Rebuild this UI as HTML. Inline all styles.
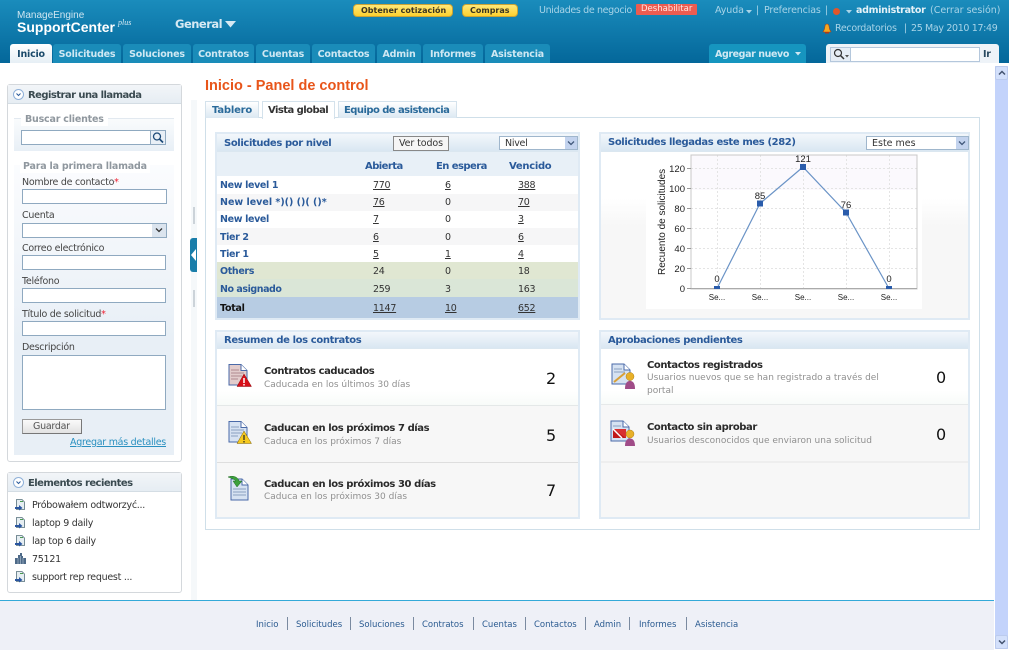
<!DOCTYPE html>
<html lang="es"><head><meta charset="utf-8"><title>SupportCenter Plus</title>
<style>
*{box-sizing:border-box}
html,body{margin:0;padding:0;width:1009px;height:650px;overflow:hidden;background:#fff;font-family:"DejaVu Sans",Verdana,sans-serif;font-size:9.5px;color:#333;letter-spacing:-.27px}
svg text{letter-spacing:0}
.a,.t,svg.i{position:absolute}
.t{white-space:nowrap;line-height:12px}
b{font-weight:bold}
.tab{position:absolute;top:44px;height:19px;background:#1a8cb9;border-radius:3px 3px 0 0;color:#cfe8f3;font-weight:bold;font-size:9.5px;letter-spacing:-.2px;line-height:22px;text-align:center;white-space:nowrap}
.ph{position:absolute;background:linear-gradient(#f3f7fb,#d9e7f2);border-bottom:1px solid #dbe7f0;color:#2a5a9a;font-weight:bold;font-size:10px;letter-spacing:-.38px;padding-left:8px;white-space:nowrap}
.panel{position:absolute;border:2px solid #dfeaf4;background:#fff}
.inp{position:absolute;height:15px;background:#fff;border:1px solid #8fa9c0}
.lab{color:#444}
.row{position:absolute;left:217px;width:361px}
.n{color:#2a5a9a;font-weight:bold;letter-spacing:-.35px}
.u{text-decoration:underline;color:#333}
.ft{top:619px;color:#2a5a90;font-size:8.5px;letter-spacing:0}
.sep{position:absolute;top:617px;width:1px;height:13px;background:#7a8aa0}
.rt{color:#2a2a2a;font-weight:bold;font-size:10px;letter-spacing:-.43px}
.rs{color:#909090;font-size:9px;letter-spacing:0}
.big{font-size:16px;color:#111;letter-spacing:0}
.sb{color:#a8d4e8;font-size:9.5px;letter-spacing:0}
.th{font-size:10px;color:#2a5a9a;font-weight:bold;letter-spacing:-.55px}
.tb{font-size:10px;font-weight:bold;letter-spacing:-.55px}
.bh{font-size:10px;font-weight:bold;color:#3a4a50;letter-spacing:-.55px}
.leg{font-size:9.5px;font-weight:bold;color:#8f979e;letter-spacing:-.2px}
</style></head><body>

<!-- header -->
<div class="a" style="left:0;top:0;width:1009px;height:63px;background:linear-gradient(#1a8cbc,#04679a)"></div>
<div class="t" style="left:17px;top:10px;font-family:'Liberation Sans',sans-serif;font-size:10px;color:#cfe6f1;letter-spacing:0">ManageEngine</div>
<div class="t" style="left:17px;top:21px;font-family:'Liberation Sans',sans-serif;font-size:14px;font-weight:bold;color:#fff;letter-spacing:0">SupportCenter</div>
<div class="t" style="left:118px;top:17px;font-family:'Liberation Serif',serif;font-style:italic;font-size:8px;color:#d4e9f3;letter-spacing:0">plus</div>
<div class="t" style="left:175px;top:18px;font-size:11.5px;font-weight:bold;color:#d6e9f3;letter-spacing:-.5px">General</div>
<svg class="i" style="left:225px;top:21px" width="11" height="7"><path d="M0 0H11L5.500 6.500Z" fill="#d6e9f3"/></svg>

<div class="a" style="left:353px;top:4px;width:100px;height:13px;border-radius:4px;background:linear-gradient(#ffe878,#fdd02e);border:1px solid #c9a336"></div>
<div class="t" style="left:361px;top:5px;font-size:8px;font-weight:bold;color:#3a3420;letter-spacing:0">Obtener cotización</div>
<div class="a" style="left:462px;top:4px;width:56px;height:13px;border-radius:4px;background:linear-gradient(#ffe878,#fdd02e);border:1px solid #c9a336"></div>
<div class="t" style="left:470px;top:5px;font-size:8px;font-weight:bold;color:#3a3420;letter-spacing:0">Compras</div>

<div class="t sb" style="left:539px;top:5px;letter-spacing:-.35px">Unidades de negocio</div>
<div class="a" style="left:636px;top:4px;width:61px;height:11px;background:#ec5c50;border-radius:1px"></div>
<div class="t" style="left:641px;top:3px;font-size:8.5px;color:#ffe6e0;letter-spacing:0">Deshabilitar</div>
<div class="t sb" style="left:715px;top:5px;letter-spacing:-.1px">Ayuda</div>
<svg class="i" style="left:746px;top:10px" width="6" height="4"><path d="M0 0H6L3 3.500Z" fill="#a8d4e8"/></svg>
<div class="t sb" style="left:756px;top:5px">|</div>
<div class="t sb" style="left:764px;top:5px;letter-spacing:-.15px">Preferencias</div>
<div class="t sb" style="left:825px;top:5px">|</div>
<div class="a" style="left:833px;top:8px;width:7px;height:7px;border-radius:50%;background:#e2562a"></div>
<svg class="i" style="left:846px;top:10px" width="6" height="4"><path d="M0 0H6L3 3.500Z" fill="#a8d4e8"/></svg>
<div class="t" style="left:856px;top:5px;font-weight:bold;color:#e4f1f7;font-size:9.500px;letter-spacing:-.3px">administrator</div>
<div class="t sb" style="left:930px;top:5px">(Cerrar sesión)</div>
<svg class="i" style="left:822px;top:23px" width="10" height="11"><path d="M5 1C3 1 3 3 2.500 6L1 9H9L7.500 6C7 3 7 1 5 1Z" fill="#f6a71e" stroke="#a8431a" stroke-width=".6"/><rect x="3" y="9" width="4" height="1.500" fill="#b23a14"/></svg>
<div class="t sb" style="left:835px;top:23px;letter-spacing:-.3px">Recordatorios</div>
<div class="t sb" style="left:904px;top:23px">|</div>
<div class="t sb" style="left:911px;top:23px;letter-spacing:-.35px">25 May 2010 17:49</div>

<div class="tab" style="left:10px;width:42px;background:linear-gradient(#fff,#e6eff5);color:#1a4a6a">Inicio</div>
<div class="tab" style="left:53px;width:68px">Solicitudes</div>
<div class="tab" style="left:123px;width:68px">Soluciones</div>
<div class="tab" style="left:193px;width:61px">Contratos</div>
<div class="tab" style="left:256px;width:54px">Cuentas</div>
<div class="tab" style="left:312px;width:63px">Contactos</div>
<div class="tab" style="left:377px;width:44px">Admin</div>
<div class="tab" style="left:423px;width:60px">Informes</div>
<div class="tab" style="left:485px;width:65px">Asistencia</div>
<div class="tab" style="left:709px;width:97px;background:#1695bf;letter-spacing:-.4px;text-align:left;padding-left:6px">Agregar nuevo</div>
<svg class="i" style="left:795px;top:52px" width="6" height="4"><path d="M0 0H6L3 3.500Z" fill="#cfe8f3"/></svg>

<div class="a" style="left:826px;top:44px;width:173px;height:19px;background:#eef3f8;border-radius:3px 3px 0 0"></div>
<div class="a" style="left:830px;top:47px;width:150px;height:15px;background:#fff;border:1px solid #b4c7dc"></div>
<div class="a" style="left:831px;top:48px;width:20px;height:13px;background:#e6edf5;border-right:1px solid #b4c7dc"></div>
<svg class="i" style="left:833px;top:48px" width="18" height="13"><circle cx="5" cy="5" r="3.500" fill="none" stroke="#333" stroke-width="1.200"/><path d="M7.500 7.500L11 11" stroke="#333" stroke-width="1.500"/><path d="M12 7H16L14 9.500Z" fill="#555"/></svg>
<div class="t" style="left:983px;top:49px;font-weight:bold;font-size:9.5px;color:#2a4a60">Ir</div>

<!-- scrollbar -->
<div class="a" style="left:995px;top:66px;width:13px;height:583px;background:#c3d3fb"></div>
<div class="a" style="left:995px;top:66px;width:13px;height:14px;background:#d3e0fb;border:1px solid #bccbed;border-radius:2px"></div>
<svg class="i" style="left:998px;top:70px" width="8" height="6"><path d="M1 4.500L4 1.500L7 4.500" fill="none" stroke="#44536f" stroke-width="1.500"/></svg>
<div class="a" style="left:995px;top:635px;width:13px;height:14px;background:#d3e0fb;border:1px solid #bccbed;border-radius:2px"></div>
<svg class="i" style="left:998px;top:639px" width="8" height="6"><path d="M1 1.500L4 4.500L7 1.500" fill="none" stroke="#44536f" stroke-width="1.500"/></svg>

<!-- splitter -->
<div class="a" style="left:191px;top:100px;width:6px;height:500px;background:#f5f8fa"></div>
<div class="a" style="left:193px;top:207px;width:2px;height:17px;background:#ccd3d9"></div>
<div class="a" style="left:193px;top:290px;width:2px;height:17px;background:#ccd3d9"></div>
<div class="a" style="left:190px;top:238px;width:7px;height:34px;background:#1a7eaa;border-radius:3px 0 0 3px"></div>
<svg class="i" style="left:190px;top:249px" width="7" height="12"><path d="M6 0V12L1 6Z" fill="#fff"/></svg>

<!-- left box 1 -->
<div class="a" style="left:7px;top:84px;width:175px;height:378px;border:1px solid #d4d8dc;border-radius:3px;background:#fff"></div>
<div class="a" style="left:8px;top:85px;width:173px;height:19px;background:linear-gradient(#f2f5f8,#e6edf3);border-bottom:1px solid #d4dde4"></div>
<div class="a" style="left:13px;top:89px;width:11px;height:11px;border-radius:50%;border:1px solid #8fb0d8;background:#fff"></div>
<svg class="i" style="left:16px;top:93px" width="5" height="4"><path d="M.5 .5L2.500 2.500L4.500 .5" fill="none" stroke="#2a5a9a"/></svg>
<div class="t bh" style="left:28px;top:90px">Registrar una llamada</div>

<div class="a" style="left:14px;top:118px;width:160px;height:33px;background:linear-gradient(#fafcfd,#e8eff6)"></div>
<div class="a" style="left:14px;top:118px;width:160px;height:1px;background:#e2e9f0"></div>
<div class="t leg" style="left:21px;top:114px;background:#fff;padding:0 4px">Buscar clientes</div>
<div class="inp" style="left:21px;top:130px;width:145px"></div>
<div class="a" style="left:150px;top:130px;width:16px;height:15px;background:#e8eff6;border:1px solid #8fa9c0"></div>
<svg class="i" style="left:151px;top:131px" width="14" height="13"><circle cx="6" cy="5.500" r="3.500" fill="none" stroke="#1c4a78" stroke-width="1.300"/><path d="M8.500 8L12 11.500" stroke="#1c4a78" stroke-width="1.700"/></svg>

<div class="a" style="left:14px;top:165px;width:160px;height:290px;background:linear-gradient(#fbfcfe,#e8eff6 60%)"></div>
<div class="t leg" style="left:20px;top:161px;background:#fff;padding:0 3px">Para la primera llamada</div>
<div class="t lab" style="left:22px;top:177px">Nombre de contacto<span style="color:#e23">*</span></div>
<div class="inp" style="left:22px;top:189px;width:145px"></div>
<div class="t lab" style="left:22px;top:210px">Cuenta</div>
<div class="inp" style="left:22px;top:223px;width:145px"></div>
<div class="a" style="left:152px;top:224px;width:14px;height:13px;background:#dbe4ee"></div>
<svg class="i" style="left:155px;top:228px" width="8" height="5"><path d="M1 .5L4 3.500L7 .5" fill="none" stroke="#333" stroke-width="1.300"/></svg>
<div class="t lab" style="left:22px;top:243px">Correo electrónico</div>
<div class="inp" style="left:22px;top:255px;width:144px"></div>
<div class="t lab" style="left:22px;top:276px">Teléfono</div>
<div class="inp" style="left:22px;top:288px;width:144px"></div>
<div class="t lab" style="left:22px;top:309px">Título de solicitud<span style="color:#e23">*</span></div>
<div class="inp" style="left:22px;top:321px;width:144px"></div>
<div class="t lab" style="left:22px;top:342px">Descripción</div>
<div class="inp" style="left:22px;top:355px;width:144px;height:55px"></div>
<div class="a" style="left:22px;top:419px;width:60px;height:15px;background:linear-gradient(#fafafa,#e2e2e2);border:1px solid #999;border-right-color:#777;border-bottom-color:#777"></div>
<div class="t" style="left:33px;top:421px;color:#555">Guardar</div>
<div class="t" style="left:70px;top:437px;color:#2a90c0;text-decoration:underline">Agregar más detalles</div>

<!-- left box 2 -->
<div class="a" style="left:7px;top:472px;width:175px;height:121px;border:1px solid #d4d8dc;border-radius:3px;background:#fff"></div>
<div class="a" style="left:8px;top:473px;width:173px;height:19px;background:linear-gradient(#f2f5f8,#e6edf3);border-bottom:1px solid #d4dde4"></div>
<div class="a" style="left:13px;top:477px;width:11px;height:11px;border-radius:50%;border:1px solid #8fb0d8;background:#fff"></div>
<svg class="i" style="left:16px;top:481px" width="5" height="4"><path d="M.5 .5L2.500 2.500L4.500 .5" fill="none" stroke="#2a5a9a"/></svg>
<div class="t bh" style="left:28px;top:478px">Elementos recientes</div>
<svg class="i" style="left:15px;top:499px" width="11" height="12"><path d="M1.500 .5H7L9.500 3V10.500H1.500Z" fill="#e6eef2" stroke="#56707c" stroke-width=".8"/><path d="M0 8H4V6L7.500 9L4 11.500V10H0Z" fill="#2a56a0"/><path d="M5 2.500H8" stroke="#4a9a50"/></svg>
<svg class="i" style="left:15px;top:517px" width="11" height="12"><path d="M1.500 .5H7L9.500 3V10.500H1.500Z" fill="#e6eef2" stroke="#56707c" stroke-width=".8"/><path d="M0 8H4V6L7.500 9L4 11.500V10H0Z" fill="#2a56a0"/><path d="M5 2.500H8" stroke="#4a9a50"/></svg>
<svg class="i" style="left:15px;top:535px" width="11" height="12"><path d="M1.500 .5H7L9.500 3V10.500H1.500Z" fill="#e6eef2" stroke="#56707c" stroke-width=".8"/><path d="M0 8H4V6L7.500 9L4 11.500V10H0Z" fill="#2a56a0"/><path d="M5 2.500H8" stroke="#4a9a50"/></svg>
<svg class="i" style="left:15px;top:553px" width="11" height="12"><path d="M0 11V5H3V2H5V0H7V3H8V5H11V11Z" fill="#4e6a88"/><path d="M3 5V11M5.500 3V11M8 5V11" stroke="#a9bccd" stroke-width=".7"/></svg>
<svg class="i" style="left:15px;top:571px" width="11" height="12"><path d="M1.500 .5H7L9.500 3V10.500H1.500Z" fill="#e6eef2" stroke="#56707c" stroke-width=".8"/><path d="M0 8H4V6L7.500 9L4 11.500V10H0Z" fill="#2a56a0"/><path d="M5 2.500H8" stroke="#4a9a50"/></svg>
<div class="t" style="left:32px;top:500px">Próbowałem odtworzyć...</div>
<div class="t" style="left:32px;top:518px">laptop 9 daily</div>
<div class="t" style="left:32px;top:536px">lap top 6 daily</div>
<div class="t" style="left:32px;top:554px">75121</div>
<div class="t" style="left:32px;top:572px">support rep request ...</div>

<!-- main -->
<div class="t" style="left:205px;top:79px;line-height:15px;font-family:'Liberation Sans',sans-serif;font-size:14.500px;font-weight:bold;color:#e8551a;letter-spacing:0">Inicio - Panel de control</div>
<div class="a" style="left:205px;top:117px;width:775px;height:413px;border:1px solid #cfdfe9;background:#fff"></div>
<div class="a" style="left:205px;top:101px;width:54px;height:17px;border:1px solid #d4e2ec;border-bottom:0;background:linear-gradient(#fff,#dbe8f2)"></div>
<div class="t tb" style="left:212px;top:105px;color:#2a6a9a;letter-spacing:-.2px">Tablero</div>
<div class="a" style="left:262px;top:101px;width:73px;height:18px;border:1px solid #d4e2ec;border-bottom:0;background:#fff"></div>
<div class="t tb" style="left:268px;top:105px;color:#333">Vista global</div>
<div class="a" style="left:338px;top:101px;width:119px;height:17px;border:1px solid #d4e2ec;border-bottom:0;background:linear-gradient(#fff,#dbe8f2)"></div>
<div class="t tb" style="left:344px;top:105px;color:#2a6a9a">Equipo de asistencia</div>

<!-- P1 table -->
<div class="panel" style="left:215px;top:132px;width:365px;height:188px"></div>
<div class="ph" style="left:217px;top:134px;width:361px;height:18px;line-height:20px;padding-left:7px">Solicitudes por nivel</div>
<div class="a" style="left:393px;top:136px;width:56px;height:15px;background:#f5f5f5;border:1px solid #888"></div>
<div class="t" style="left:399px;top:138px;color:#333;letter-spacing:-.1px">Ver todos</div>
<div class="a" style="left:499px;top:136px;width:79px;height:14px;background:#fff;border:1px solid #9fb6cc"></div>
<div class="t" style="left:505px;top:138px">Nivel</div>
<div class="a" style="left:565px;top:137px;width:12px;height:12px;background:#c3d3ee"></div>
<svg class="i" style="left:567px;top:141px" width="8" height="5"><path d="M1 .5L4 3.500L7 .5" fill="none" stroke="#41587a" stroke-width="1.300"/></svg>
<div class="row" style="top:152px;height:24px;background:#e8f0f7"></div>
<div class="row" style="top:194px;height:17px;background:#f6f6f7"></div>
<div class="row" style="top:228px;height:17px;background:#f6f6f7"></div>
<div class="row" style="top:262px;height:17px;background:#e0e7d2"></div>
<div class="row" style="top:279px;height:18px;background:#dae6d7"></div>
<div class="row" style="top:297px;height:21px;background:#b7cce3"></div>
<div class="t th" style="left:365px;top:161px">Abierta</div>
<div class="t th" style="left:436px;top:161px">En espera</div>
<div class="t th" style="left:509px;top:161px;letter-spacing:-.3px">Vencido</div>

<div class="t n" style="left:220px;top:180px">New level 1</div><div class="t u" style="left:373px;top:180px">770</div><div class="t u" style="left:445px;top:180px">6</div><div class="t u" style="left:518px;top:180px">388</div>
<div class="t n" style="left:220px;top:197px;letter-spacing:0">New level *)() ()( ()*</div><div class="t u" style="left:373px;top:197px">76</div><div class="t" style="left:445px;top:197px">0</div><div class="t u" style="left:518px;top:197px">70</div>
<div class="t n" style="left:220px;top:214px">New level</div><div class="t u" style="left:373px;top:214px">7</div><div class="t" style="left:445px;top:214px">0</div><div class="t u" style="left:518px;top:214px">3</div>
<div class="t n" style="left:220px;top:232px">Tier 2</div><div class="t u" style="left:373px;top:232px">6</div><div class="t" style="left:445px;top:232px">0</div><div class="t u" style="left:518px;top:232px">6</div>
<div class="t n" style="left:220px;top:249px">Tier 1</div><div class="t u" style="left:373px;top:249px">5</div><div class="t u" style="left:445px;top:249px">1</div><div class="t u" style="left:518px;top:249px">4</div>
<div class="t n" style="left:220px;top:266px">Others</div><div class="t" style="left:373px;top:266px">24</div><div class="t" style="left:445px;top:266px">0</div><div class="t" style="left:518px;top:266px">18</div>
<div class="t n" style="left:220px;top:284px;letter-spacing:-.45px">No asignado</div><div class="t" style="left:373px;top:284px">259</div><div class="t" style="left:445px;top:284px">3</div><div class="t" style="left:518px;top:284px">163</div>
<div class="t" style="left:220px;top:303px;font-weight:bold;color:#111">Total</div><div class="t u" style="left:373px;top:303px">1147</div><div class="t u" style="left:445px;top:303px">10</div><div class="t u" style="left:518px;top:303px">652</div>

<!-- P2 chart -->
<div class="panel" style="left:599px;top:132px;width:371px;height:188px;background:linear-gradient(#fff 0,#fff 35%,#f7f7f7 50%)"></div>
<div class="ph" style="left:601px;top:134px;width:367px;height:18px;line-height:18px;padding-left:7px">Solicitudes llegadas este mes (282)</div>
<div class="a" style="left:866px;top:136px;width:103px;height:14px;background:#fff;border:1px solid #9fb6cc"></div>
<div class="t" style="left:872px;top:138px;letter-spacing:0">Este mes</div>
<div class="a" style="left:956px;top:137px;width:12px;height:12px;background:#c3d3ee"></div>
<svg class="i" style="left:958px;top:141px" width="8" height="5"><path d="M1 .5L4 3.500L7 .5" fill="none" stroke="#41587a" stroke-width="1.300"/></svg>
<svg class="i" style="left:646px;top:153px" width="276" height="156" font-family="Liberation Sans, sans-serif" font-size="9.500" fill="#222">
<rect width="276" height="156" fill="#fff"/>
<rect x="45" y="2" width="226" height="35" fill="#fbf9fd"/>
<g stroke="#e4e4e4" stroke-dasharray="2 2" fill="none">
<path d="M45 15.500H271M45 35.500H271M45 55.500H271M45 75.500H271M45 95.500H271M45 115.500H271"/>
<path d="M71.500 2V136M114.500 2V136M157.500 2V136M200.500 2V136M243.500 2V136"/>
</g>
<path d="M45 2H271V136H45Z" fill="none" stroke="#c8c8c8"/>
<path d="M45 135.500H271" stroke="#aaa"/>
<path d="M71 135.500L114 50.500L157 14L200 59.500L243 135.500" fill="none" stroke="#6a93c6" stroke-width="1.200"/>
<g fill="#2a5cab">
<rect x="68" y="133" width="6" height="3"/><rect x="111" y="47.500" width="6" height="6"/><rect x="154" y="11" width="6" height="6"/><rect x="197" y="56.500" width="6" height="6"/><rect x="240" y="133" width="6" height="3"/>
</g>
<g text-anchor="middle">
<text x="71" y="129">0</text><text x="114" y="46">85</text><text x="157" y="9">121</text><text x="200" y="55">76</text><text x="243" y="129">0</text>
<text x="71" y="147" font-size="8">Se...</text><text x="114" y="147" font-size="8">Se...</text><text x="157" y="147" font-size="8">Se...</text><text x="200" y="147" font-size="8">Se...</text><text x="243" y="147" font-size="8">Se...</text>
</g>
<g text-anchor="end">
<text x="39" y="19">120</text><text x="39" y="39">100</text><text x="39" y="59">80</text><text x="39" y="79">60</text><text x="39" y="99">40</text><text x="39" y="119">20</text><text x="39" y="139">0</text>
</g>
<path d="M41 15.500H45M41 35.500H45M41 55.500H45M41 75.500H45M41 95.500H45M41 115.500H45M41 135.500H45" stroke="#999"/>
<text transform="translate(19 122) rotate(-90)" font-size="10">Recuento de solicitudes</text>
</svg>

<!-- P3 contracts -->
<div class="panel" style="left:215px;top:330px;width:365px;height:189px;background:#f7f7f7"></div>
<div class="ph" style="left:217px;top:332px;width:361px;height:17px;line-height:18px;padding-left:7px">Resumen de los contratos</div>
<div class="a" style="left:217px;top:349px;width:361px;height:56px;background:linear-gradient(#fff 75%,#f8fbf9)"></div>
<div class="a" style="left:217px;top:405px;width:361px;height:1px;background:#e4e8e8"></div>
<div class="a" style="left:217px;top:462px;width:361px;height:1px;background:#dedede"></div>

<svg class="i" style="left:228px;top:364px" width="24" height="24"><path d="M1 .5H13L19 6.500V21H1Z" fill="#e2cccc" stroke="#4a6aa8"/><path d="M13 .5V6.500H19" fill="#fff" stroke="#4a6aa8"/><path d="M3 6H11M3 9H16M3 12H14M3 15H10" stroke="#b08a90"/><path d="M16 10L23.500 22.500H9Z" fill="#d8101a" stroke="#8a0a10" stroke-width=".5"/><path d="M16 14V19M16 20V21.500" stroke="#fff" stroke-width="1.500"/></svg>
<div class="t rt" style="left:264px;top:366px">Contratos caducados</div>
<div class="t rs" style="left:264px;top:379px">Caducada en los últimos 30 días</div>
<div class="t big" style="left:546px;top:372px;line-height:14px">2</div>

<svg class="i" style="left:228px;top:421px" width="24" height="24"><path d="M1 .5H13L19 6.500V21H1Z" fill="#d6e2f2" stroke="#4a6aa8"/><path d="M13 .5V6.500H19" fill="#fff" stroke="#4a6aa8"/><path d="M3 6H11M3 9H16M3 12H14M3 15H10" stroke="#8aa0c0"/><path d="M16 10L23.500 22.500H9Z" fill="#f6c91e" stroke="#7a6010" stroke-width=".5"/><path d="M16 14V19M16 20V21.500" stroke="#332" stroke-width="1.300"/></svg>
<div class="t rt" style="left:264px;top:423px">Caducan en los próximos 7 días</div>
<div class="t rs" style="left:264px;top:436px">Caduca en los próximos 7 días</div>
<div class="t big" style="left:546px;top:429px;line-height:14px">5</div>

<svg class="i" style="left:227px;top:475px" width="26" height="28"><path d="M4 4H15L21 10V25H4Z" fill="#d6e2f2" stroke="#4a6aa8"/><path d="M15 4V10H21" fill="#fff" stroke="#4a6aa8"/><path d="M6 14H19M6 17H19M6 20H19" stroke="#8aa0c0"/><path d="M1 2C6 0 11 2 12 6H15L10 12L6 6H9C7 4 4 3 1 2Z" fill="#3ca03c" stroke="#1e6a22" stroke-width=".5"/></svg>
<div class="t rt" style="left:264px;top:479px">Caducan en los próximos 30 días</div>
<div class="t rs" style="left:264px;top:491px">Caduca en los próximos 30 días</div>
<div class="t big" style="left:546px;top:484px;line-height:14px">7</div>

<!-- P4 approvals -->
<div class="panel" style="left:599px;top:330px;width:371px;height:189px;background:#f7f7f7"></div>
<div class="ph" style="left:601px;top:332px;width:367px;height:17px;line-height:18px;padding-left:7px">Aprobaciones pendientes</div>
<div class="a" style="left:601px;top:349px;width:367px;height:55px;background:linear-gradient(#fff 75%,#f8fbf9)"></div>
<div class="a" style="left:601px;top:404px;width:367px;height:1px;background:#e6e9e9"></div>
<div class="a" style="left:601px;top:461px;width:367px;height:2px;background:#eeeeee"></div>

<svg class="i" style="left:611px;top:363px" width="26" height="27"><path d="M1 1H13L19 7V21H1Z" fill="#d6e2f2" stroke="#4a6aa8"/><path d="M13 1V7H19" fill="#fff" stroke="#4a6aa8"/><path d="M3 6H11M3 9H14" stroke="#8aa0c0"/><path d="M3 19L14 10" stroke="#d9a036" stroke-width="2"/><circle cx="19" cy="13.500" r="4" fill="#e8b028" stroke="#b08018" stroke-width=".5"/><path d="M14 26C14 20 16 18 19 18C22 18 24 20 24 26Z" fill="#a04c88"/></svg>
<div class="t rt" style="left:647px;top:360px">Contactos registrados</div>
<div class="t rs" style="left:647px;top:372px">Usuarios nuevos que se han registrado a través del</div>
<div class="t rs" style="left:647px;top:385px">portal</div>
<div class="t big" style="left:936px;top:371px;line-height:14px">0</div>

<svg class="i" style="left:610px;top:420px" width="26" height="27"><path d="M1 1H13L19 7V21H1Z" fill="#d6e2f2" stroke="#4a6aa8"/><path d="M13 1V7H19" fill="#fff" stroke="#4a6aa8"/><path d="M3 6H11" stroke="#8aa0c0"/><rect x="3" y="9" width="13" height="9" fill="#d83030"/><path d="M3 9L16 18H3Z" fill="#c01818"/><path d="M3 9L12 18" stroke="#fff" stroke-width="1.500"/><circle cx="20" cy="14" r="4" fill="#e8b028" stroke="#b08018" stroke-width=".5"/><path d="M15 26C15 21 17 18.500 20 18.500C23 18.500 25 21 25 26Z" fill="#a04c88"/></svg>
<div class="t rt" style="left:647px;top:422px">Contacto sin aprobar</div>
<div class="t rs" style="left:647px;top:435px">Usuarios desconocidos que enviaron una solicitud</div>
<div class="t big" style="left:936px;top:428px;line-height:14px">0</div>

<!-- footer -->
<div class="a" style="left:0;top:600px;width:994px;height:1px;background:#33a9d8"></div>
<div class="a" style="left:0;top:601px;width:994px;height:49px;background:#eef0f7"></div>
<div class="t ft" style="left:256px">Inicio</div><div class="sep" style="left:287px"></div>
<div class="t ft" style="left:296px">Solicitudes</div><div class="sep" style="left:350px"></div>
<div class="t ft" style="left:359px">Soluciones</div><div class="sep" style="left:413px"></div>
<div class="t ft" style="left:422px">Contratos</div><div class="sep" style="left:473px"></div>
<div class="t ft" style="left:482px">Cuentas</div><div class="sep" style="left:525px"></div>
<div class="t ft" style="left:534px">Contactos</div><div class="sep" style="left:585px"></div>
<div class="t ft" style="left:594px">Admin</div><div class="sep" style="left:629px"></div>
<div class="t ft" style="left:639px">Informes</div><div class="sep" style="left:686px"></div>
<div class="t ft" style="left:695px">Asistencia</div>
</body></html>
